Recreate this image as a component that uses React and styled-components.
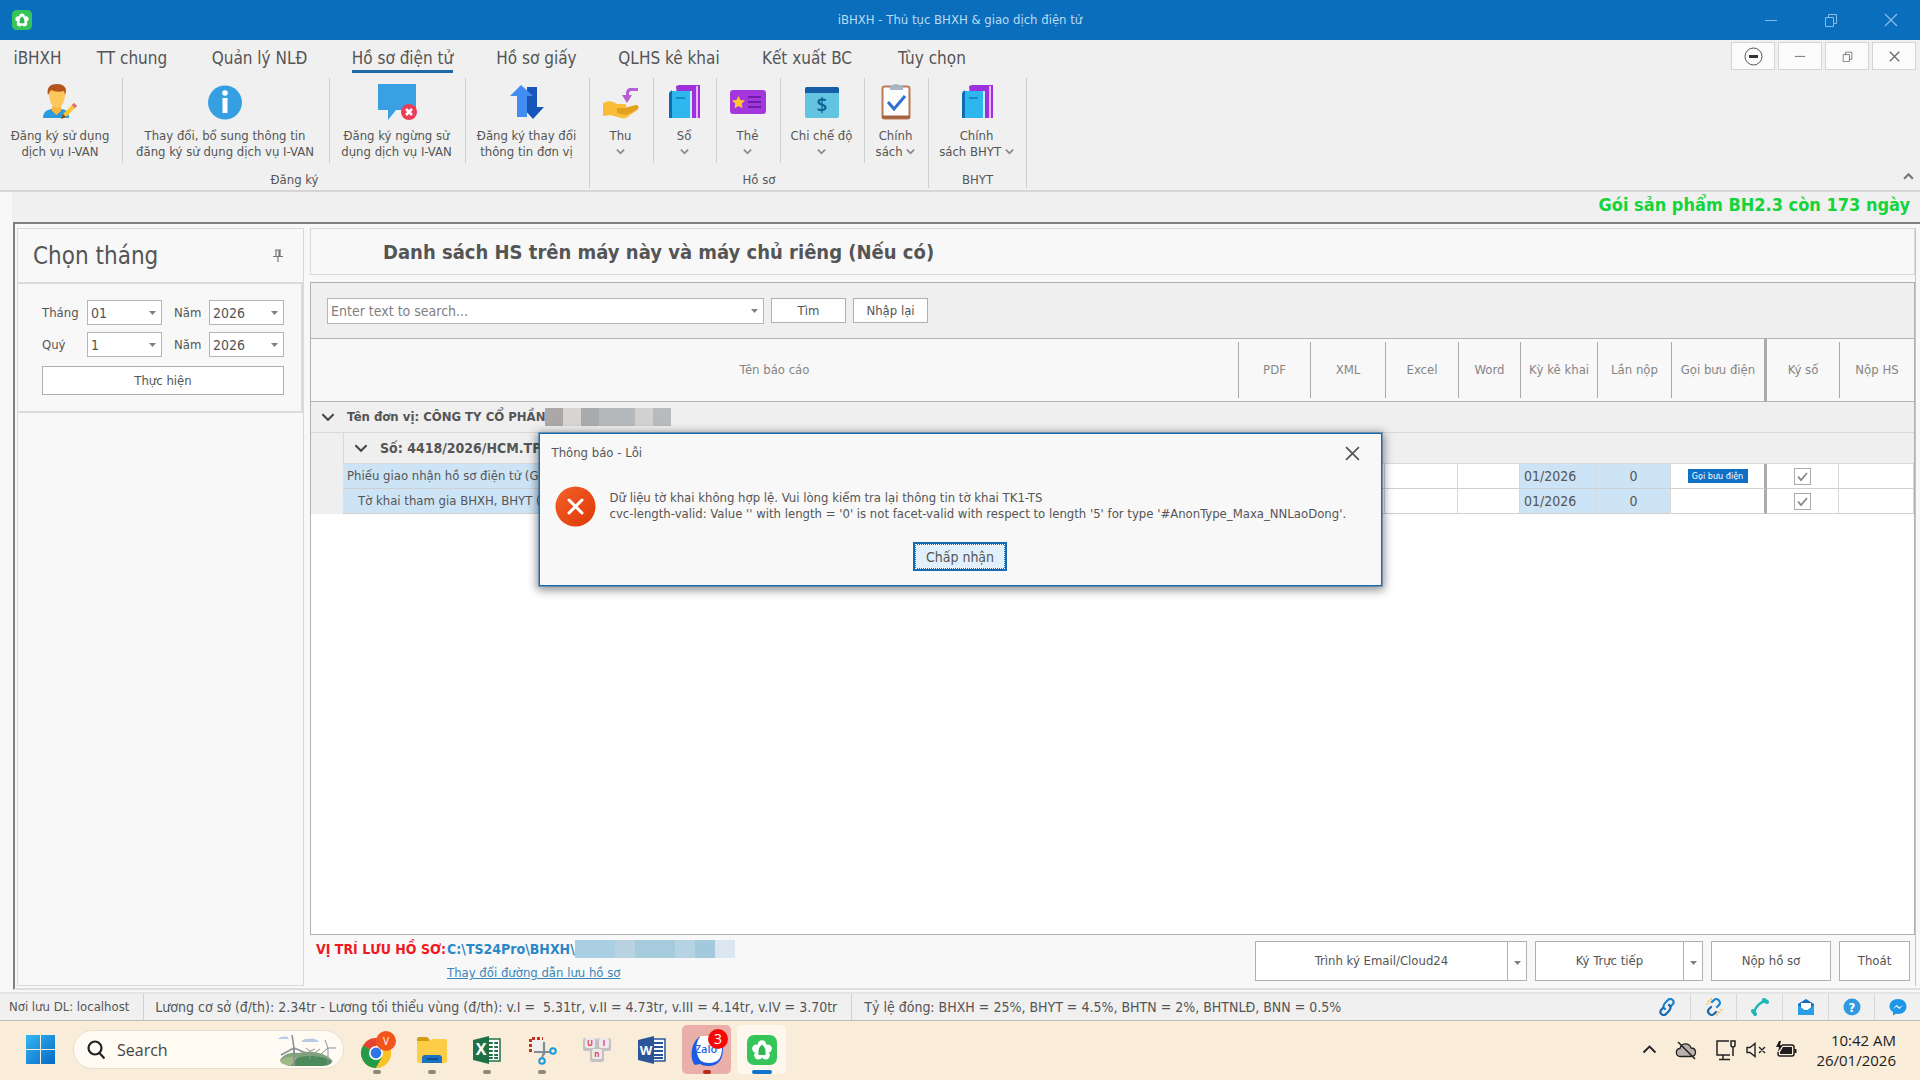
import React from 'react';
import styled, { createGlobalStyle, css } from 'styled-components';

const GlobalStyle = createGlobalStyle`
  * {
    box-sizing: border-box;
  }

  body {
    margin: 0;
    background: #f0f0f0;
    color: #555;
    font: 14px/16px "DejaVu Sans Condensed", "Open Sans", sans-serif;
  }

  button, input, select {
    margin: 0;
    color: inherit;
    font: inherit;
  }
`;

const Page = styled.div`
  display: flex;
  flex-direction: column;
  height: 100vh;
  min-width: 1280px;
`;

const Desktop = styled.div`
  position: relative;
  display: flex;
  flex: 1;
  flex-direction: column;
  min-height: 0;
`;

/* ---------- title bar ---------- */

const TitleBar = styled.header`
  display: grid;
  grid-template-columns: 1fr auto 1fr;
  align-items: center;
  height: 40px;
  padding: 0 12px;
  background: #0a6ebd;
  color: #b9dbf5;
  font-size: 13px;
`;

const WindowButtons = styled.div`
  display: flex;
  justify-content: flex-end;
  gap: 36px;
  padding-right: 5px;
`;

const PlainButton = styled.button`
  display: inline-flex;
  align-items: center;
  justify-content: center;
  padding: 0;
  border: 0;
  background: none;
`;

const TitleButton = styled(PlainButton)`
  width: 24px;
  height: 24px;
  color: #86bbea;
`;

/* ---------- ribbon ---------- */

const TabBar = styled.nav`
  display: flex;
  height: 35px;
`;

const Tab = styled.button`
  width: ${p => p.$width}px;
  padding: 0;
  border: 0;
  background: none;
  font-size: 17px;
  line-height: 22px;
  white-space: nowrap;

  span {
    display: inline-block;
    padding: 5px 0 1px;
    border-bottom: 3px solid ${p => (p.$active ? '#1f69ab' : 'transparent')};
  }
`;

const ChildButtons = styled.div`
  display: flex;
  gap: 3px;
  margin-left: auto;
  padding: 2px 4px 0 0;
`;

const ChildButton = styled(PlainButton)`
  width: 44px;
  height: 28px;
  border: 1px solid #d4d4d4;
  background: #fbfbfb;
  color: #666;
`;

const Ribbon = styled.div`
  display: flex;
  height: 117px;
  padding-top: 3px;
  border-bottom: 2px solid #d6d6d6;
`;

const Group = styled.section`
  display: flex;
  flex-direction: column;
  height: 110px;
  border-right: 1px solid #cfcfcf;
`;

const GroupItems = styled.div`
  display: flex;
  height: 87px;
`;

const GroupLabel = styled.div`
  margin-top: 9px;
  font-size: 13px;
  text-align: center;
`;

const RibbonItem = styled.button`
  display: flex;
  flex-direction: column;
  align-items: center;
  width: ${p => p.$width}px;
  padding: 6px 2px 0 0;
  border: 0;
  border-right: 1px solid #cfcfcf;
  background: none;
  font-size: 13px;
  white-space: nowrap;

  &:last-child {
    border-right: 0;
  }

  > svg {
    flex: none;
    margin-bottom: 8px;
  }
`;

const CollapseButton = styled(PlainButton)`
  align-self: flex-end;
  width: 24px;
  height: 24px;
  margin: 0 0 2px auto;
`;

const Notice = styled.div`
  height: 30px;
  margin-left: 12px;
  padding: 2px 10px 0 0;
  box-shadow: -12px 0 0 #f8f8f8;
  color: #14d43a;
  font-size: 18px;
  font-weight: bold;
  line-height: 22px;
  text-align: right;
`;

/* ---------- workspace ---------- */

const Workspace = styled.main`
  display: flex;
  flex: 1;
  gap: 6px;
  min-height: 0;
  margin: 0 0 2px;
  padding: 4px 4px 2px 2px;
  border-top: 2px solid #808080;
  border-left: 2px solid #808080;
  border-bottom: 2px solid #dedede;
  background: #f8f8f8;
`;

const WorkspaceFrame = styled.div`
  display: flex;
  flex: 1;
  min-height: 0;
  padding: 0 0 0 13px;
  background: #f8f8f8;
`;

const Side = styled.aside`
  width: 287px;
  border: 1px solid #d9d9d9;
`;

const SideHeader = styled.div`
  display: flex;
  align-items: center;
  justify-content: space-between;
  height: 55px;
  padding: 0 20px 0 15px;
  border-bottom: 2px solid #dadada;

  h2 {
    margin: 0;
    font-size: 24px;
    font-weight: normal;
    line-height: 30px;
  }
`;

const PeriodForm = styled.form`
  display: grid;
  grid-template-columns: 45px 75px 47px 75px;
  row-gap: 7px;
  align-items: center;
  height: 129px;
  padding: 0 0 0 24px;
  border-right: 2px solid #dadada;
  border-bottom: 2px solid #dadada;
  align-content: center;

  label {
    font-size: 13px;
  }

  label:nth-of-type(even) {
    padding-left: 12px;
  }
`;

const SelectBox = styled.div`
  position: relative;

  select {
    width: 100%;
    height: 25px;
    padding: 0 3px;
    border: 1px solid #b5b5b5;
    border-radius: 0;
    background: #fff;
    appearance: none;
  }

  svg {
    position: absolute;
    top: 11px;
    right: 6px;
    pointer-events: none;
  }
`;

const Button = styled.button`
  height: ${p => p.$height || 25}px;
  width: ${p => p.$width}px;
  padding: 0;
  border: 1px solid #b0b0b0;
  background: #fefefe;
  font-size: 13px;

  ${p => p.$full && css`
    grid-column: 1 / -1;
    width: 242px;
    height: 29px;
    margin-top: 2px;
  `}
`;

const Content = styled.section`
  display: flex;
  flex: 1;
  flex-direction: column;
  min-width: 0;
  border-right: 1px solid #c4c4c4;
`;

const PageTitle = styled.h1`
  height: 47px;
  margin: 0 0 7px;
  padding: 0 72px;
  border: 1px solid #d9d9d9;
  font-size: 20px;
  line-height: 46px;
`;

const Grid = styled.div`
  flex: 1;
  min-height: 0;
  border: 1px solid #b0b0b0;
  background: #fff;
`;

const SearchBar = styled.form`
  display: flex;
  gap: 7px;
  align-items: center;
  height: 55px;
  padding: 0 16px;
  background: #efefef;
`;

const SearchBox = styled.div`
  display: flex;
  align-items: center;
  width: 437px;
  height: 26px;
  padding-right: 5px;
  border: 1px solid #b5b5b5;
  background: #fff;

  input {
    flex: 1;
    min-width: 0;
    padding: 0 3px;
    border: 0;
    outline: 0;
    background: none;
  }

  input::placeholder {
    color: #808080;
    opacity: 1;
  }
`;

const Table = styled.table`
  width: 100%;
  border-collapse: separate;
  border-spacing: 0;
  table-layout: fixed;
`;

const HeadCell = styled.th`
  height: 64px;
  padding: 0;
  border-top: 1px solid #b5b5b5;
  border-bottom: 1px solid #b5b5b5;
  border-right: ${p => (p.$fixedEdge ? '3px solid #aaa' : '0')};
  background: #f8f8f8;
  color: #858585;
  font-size: 13px;
  font-weight: normal;
  text-align: center;

  div {
    height: 56px;
    border-left: ${p => (p.$bare ? '0' : '1px solid #aaa')};
    line-height: 56px;
  }
`;

const GroupCell = styled.td`
  height: ${p => p.$height}px;
  padding: 0 10px;
  border-bottom: 1px solid #d8d8d8;
  border-left: ${p => (p.$nested ? '1px solid #d8d8d8' : '0')};
  background: #efefef;
  font-weight: bold;
  font-size: ${p => (p.$nested ? 14 : 13)}px;

  > div {
    display: flex;
    align-items: center;
    white-space: nowrap;
  }

  button {
    width: 14px;
    margin-right: 12px;
  }
`;

const IndentCell = styled.td`
  padding: 0;
  background: #efefef;
`;

const Cell = styled.td`
  height: 25px;
  padding: 0 4px 0 ${p => p.$indent || 4}px;
  border-right: ${p => (p.$fixedEdge ? '3px solid #aaa' : '1px solid #d8d8d8')};
  border-bottom: 1px solid #d0d0d0;
  background: ${p => (p.$selected ? '#cde4f7' : '#fff')};
  font-size: ${p => (p.$small ? 13 : 14)}px;
  line-height: 16px;
  text-align: ${p => p.$align || 'left'};
  white-space: nowrap;
  overflow: hidden;
`;

const PostTag = styled.button`
  display: block;
  width: 60px;
  height: 14px;
  margin: 0 auto;
  padding: 0;
  border: 0;
  background: #0f70c5;
  color: #fff;
  font-size: 9px;
  line-height: 14px;
`;

const CheckBox = styled.span`
  position: relative;
  display: block;
  width: 17px;
  height: 17px;
  margin: 0 auto;

  input {
    display: block;
    width: 17px;
    height: 17px;
    margin: 0;
    border: 1px solid #aaa;
    background: #fff;
    appearance: none;
  }

  svg {
    position: absolute;
    top: 2px;
    left: 2px;
    pointer-events: none;
  }
`;

const Mosaic = styled.span`
  display: inline-flex;
  height: 18px;

  i {
    width: ${p => p.$tile}px;
    background: var(--c);
  }
`;

const Footer = styled.footer`
  display: flex;
  align-items: center;
  justify-content: space-between;
  height: 51px;
  padding: 0 5px 0 6px;
`;

const StoragePath = styled.div`
  display: grid;
  grid-template-columns: 131px auto;
  row-gap: 7px;
  align-items: center;
  color: #2b88c6;
  font-size: 14px;
  white-space: nowrap;

  b {
    color: #f01822;
  }

  strong {
    display: flex;
    align-items: center;
  }

  a {
    grid-column: 2;
    color: #3a86b8;
    font-size: 13px;
  }
`;

const Actions = styled.div`
  display: flex;
  gap: 8px;
`;

const SplitButton = styled.div`
  display: flex;

  button + button {
    margin-left: -1px;
  }
`;

const StatusBar = styled.div`
  display: flex;
  align-items: center;
  height: 29px;
  border-top: 2px solid #e4e4e4;
  border-bottom: 1px solid #bdbdbd;
  background: #f0f0f0;
`;

const StatusText = styled.div`
  padding: 4px 14px 4px ${p => p.$left}px;
  border-right: ${p => (p.$last ? '0' : '1px solid #d0d0d0')};
  font-size: ${p => (p.$small ? 13 : 14)}px;
  line-height: 18px;
  white-space: pre;
`;

const StatusIcons = styled.div`
  display: flex;
  margin-left: auto;

  button {
    width: 46px;
    height: 26px;
  }

  button + button {
    border-left: 1px solid #d8d8d8;
  }
`;

/* ---------- message dialog ---------- */

const DialogLayer = styled.div`
  position: absolute;
  inset: 0;
  display: flex;
  align-items: center;
  justify-content: center;
  padding-bottom: 2px;
`;

const Dialog = styled.div`
  width: 843px;
  height: 153px;
  border: 1px solid #1a69ab;
  outline: 1px solid rgba(26, 105, 171, 0.45);
  background: #f8f8f8;
  box-shadow: 0 2px 9px 2px rgba(0, 0, 0, 0.45);
  font-size: 13px;
`;

const DialogHeader = styled.div`
  display: flex;
  align-items: center;
  justify-content: space-between;
  height: 38px;
  padding: 0 21px 0 12px;
`;

const DialogBody = styled.div`
  display: flex;
  align-items: center;
  gap: 14px;
  height: 68px;
  padding: 0 15px;

  svg {
    flex: none;
  }

  p {
    margin: 0;
    white-space: nowrap;
  }
`;

const AcceptButton = styled.button`
  display: block;
  width: 94px;
  height: 29px;
  margin: 2px auto 0;
  padding: 0;
  border: 3px solid #156ab4;
  outline: 1px dotted #fff;
  outline-offset: -3px;
  background: #e1f0fa;
  font-size: 14px;
`;

/* ---------- taskbar ---------- */

const Taskbar = styled.footer`
  display: flex;
  align-items: center;
  height: 59px;
  padding: 0 24px 2px 26px;
  background: #f9edda;
  color: #1c1c1c;
  font-family: "Open Sans", sans-serif;
`;

const TaskSearch = styled.label`
  display: flex;
  align-items: center;
  width: 271px;
  height: 39px;
  margin: 0 5px 0 18px;
  padding: 0 7px 0 13px;
  border: 1px solid #e9dfcf;
  border-radius: 20px;
  background: #fffaf2;

  input {
    flex: 1;
    min-width: 0;
    padding: 0 12px;
    border: 0;
    outline: 0;
    background: none;
    font-size: 16px;
  }

  input::placeholder {
    color: #454545;
    opacity: 1;
  }
`;

const TaskApp = styled(PlainButton)`
  position: relative;
  width: 49px;
  height: 49px;
  margin: 0 3px;
  border-radius: 5px;
  background: ${p => p.$back || 'none'};

  &::after {
    content: '';
    position: absolute;
    bottom: 0;
    left: 50%;
    width: ${p => p.$mark || 8}px;
    height: 4px;
    margin-left: -${p => (p.$mark || 8) / 2}px;
    border-radius: 2px;
    background: ${p => p.$markColor || 'none'};
  }
`;

const Tray = styled.div`
  display: flex;
  align-items: center;
  gap: 9px;
  margin-left: auto;
`;

const Clock = styled.div`
  width: 90px;
  font-size: 15px;
  line-height: 20px;
  text-align: right;
`;

/* ---------- drawings ---------- */

const Chevron = ({ up, size = 10, color = '#777', width = 2 }) => (
  <svg width={size} height={size} viewBox="0 0 10 10" fill="none" stroke={color} strokeWidth={width}>
    <path d={up ? 'M1 7l4-4 4 4' : 'M1 3l4 4 4-4'} />
  </svg>
);

const Caret = () => (
  <svg width="7" height="4" viewBox="0 0 7 4"><path d="M0 0h7L3.5 4z" fill="#808080" /></svg>
);

const Minimize = ({ size = 14 }) => (
  <svg width={size} height={size} viewBox="0 0 14 14"><path d="M1 7.5h12" stroke="currentColor" /></svg>
);

const Restore = ({ size = 14 }) => (
  <svg width={size} height={size} viewBox="0 0 14 14" fill="none" stroke="currentColor">
    <path d="M1.500 4.500h8v9h-8zM4.500 4.500v-3h8v9h-3" />
  </svg>
);

const Close = ({ size = 14, width = 1.3 }) => (
  <svg width={size} height={size} viewBox="0 0 14 14" stroke="currentColor" strokeWidth={width}>
    <path d="M1 1l12 12M13 1L1 13" />
  </svg>
);

const AppLogo = ({ size }) => (
  <svg width={size} height={size} viewBox="0 0 30 30">
    <rect width="30" height="30" rx="7" fill="#35c55b" />
    <g fill="#fff">
      <circle cx="15" cy="9.500" r="4.200" />
      <circle cx="9.300" cy="13.600" r="4.200" />
      <circle cx="20.700" cy="13.600" r="4.200" />
      <circle cx="11.400" cy="20.300" r="4.200" />
      <circle cx="18.600" cy="20.300" r="4.200" />
    </g>
    <path d="M15 9.500c2.500 2.500 3.500 4 3.500 6.500V20h-7v-4c0-2.500 1-4 3.500-6.500z" fill="#2fb553" />
  </svg>
);

const UserIcon = () => (
  <svg width="36" height="36" viewBox="0 0 36 36">
    <path d="M1 34c0-7 5-9 11-9h6c6 0 9 3 9 9z" fill="#2b9be0" />
    <path d="M10 22h9v5l-4.500 4-4.500-4z" fill="#f6b73c" />
    <path d="M7 9c0-6 3-7 8-7s8 2 8 8c0 8-4 14-8 14S7 18 7 9z" fill="#fdc75b" />
    <path d="M6 11C4 3 9 0 15 0c7 0 11 4 8 11l-1-4c-4 1-9 1-13-1z" fill="#b5541c" />
    <path d="M21 30L32 19l3 3-11 11-5 2z" fill="#f9c331" />
    <path d="M30 21l2-2 3 3-2 2z" fill="#d9668a" />
    <path d="M19 35l2-5 3 3z" fill="#6b4a2b" />
  </svg>
);

const InfoIcon = () => (
  <svg width="36" height="36" viewBox="0 0 36 36">
    <circle cx="18" cy="18.500" r="17" fill="#369fe2" />
    <circle cx="18" cy="9" r="2.800" fill="#fff" />
    <path d="M15.500 14h5v15h-5z" fill="#fff" />
  </svg>
);

const StopIcon = () => (
  <svg width="40" height="36" viewBox="0 0 40 36">
    <path d="M1 0h38v26H19l-8 10V26H1z" fill="#39a0e3" />
    <circle cx="32" cy="28" r="8" fill="#ec3d55" />
    <path d="M29 25l6 6M35 25l-6 6" stroke="#fff" strokeWidth="2.600" />
  </svg>
);

const ArrowsIcon = () => (
  <svg width="36" height="36" viewBox="0 0 36 36">
    <path d="M18 3h10v20h7L24 35 13 23h5z" fill="#1755b8" />
    <path d="M12 1l12 11h-6v21H8V12H1z" fill="#418df2" />
  </svg>
);

const HandIcon = () => (
  <svg width="36" height="36" viewBox="0 0 36 36">
    <path d="M0 19c6-3 10-2 14 1h7c3 0 3 3 1 4l11-3c3 0 3 3 1 5L23 34c-3 1-5 0-8-1l-8-2-7 1z" fill="#f9bd38" />
    <path d="M14 24h8l11-3c3 0 3 3 1 5l-11 5-9-2z" fill="#e3a020" />
    <path d="M35 4H28c-4 0-5 2-5 7h-4l5 8 5-8h-3c0-3 0-4 3-4h6z" fill="#b75fd6" />
  </svg>
);

const BooksIcon = () => (
  <svg width="34" height="36" viewBox="0 0 34 36">
    <path d="M9 2l3-1h21v33H12z" fill="#9d32dc" />
    <path d="M29 2h2v32h-2z" fill="#eeb5fa" />
    <path d="M3 7h20v27H3z" fill="#2eb6ee" />
    <path d="M2 9l3-3v28H2z" fill="#0c6eae" />
    <path d="M23 7h2v27h-2z" fill="#c4ecfa" />
    <path d="M9 14h9" stroke="#147caf" strokeWidth="1.500" />
  </svg>
);

const CardIcon = () => (
  <svg width="36" height="36" viewBox="0 0 36 36">
    <rect y="6" width="36" height="24" rx="3" fill="#a436dd" />
    <path d="M8.500 12l2 4 4.500.6-3.300 3.100.9 4.500-4.100-2.200-4 2.200.8-4.500L2 16.600l4.500-.6z" fill="#ffc533" />
    <path d="M18 13h13M18 18h13M18 23h13" stroke="#6d1ea5" strokeWidth="1.800" />
  </svg>
);

const MoneyIcon = () => (
  <svg width="36" height="36" viewBox="0 0 36 36">
    <rect x="1" y="3" width="34" height="31" rx="2" fill="#63c4e2" />
    <path d="M1 9V5q0-2 2-2h30q2 0 2 2v4z" fill="#155fa6" />
    <text x="18" y="28" textAnchor="middle" fontFamily="Open Sans" fontSize="19" fontWeight="600" fill="#10608b">$</text>
  </svg>
);

const ClipboardIcon = () => (
  <svg width="36" height="36" viewBox="0 0 36 36">
    <rect x="4.500" y="2.500" width="27" height="32" rx="2" fill="#fdfdfd" stroke="#bd7854" strokeWidth="2" />
    <path d="M4 33h28" stroke="#a55f40" strokeWidth="3" />
    <path d="M12 1h3q3-2 6 0h4v5H12z" fill="#a9b4c2" />
    <path d="M10 18l6 7 11-13" fill="none" stroke="#2e6fd3" strokeWidth="3" />
  </svg>
);

const PinIcon = () => (
  <svg width="10" height="14" viewBox="0 0 10 14" fill="none" stroke="#777" strokeWidth="1.200">
    <path d="M2 1h6M3 1v6M7 1v6M6 1v6M0 7.500h10M5 7.500V13" />
  </svg>
);

const ErrorIcon = () => (
  <svg width="41" height="41" viewBox="0 0 41 41">
    <defs>
      <linearGradient id="err" x1="0" y1="0" x2="1" y2="1">
        <stop offset="0" stopColor="#f4602a" />
        <stop offset="1" stopColor="#dd3a06" />
      </linearGradient>
    </defs>
    <circle cx="20.500" cy="20.500" r="20" fill="url(#err)" />
    <path d="M14 14l13 13M27 14L14 27" stroke="#fff" strokeWidth="3" strokeLinecap="round" />
  </svg>
);

const LinkIcon = ({ broken }) => (
  <svg width="18" height="18" viewBox="0 0 18 18" fill="none" strokeWidth="2.200" strokeLinecap="round">
    <g stroke="#1c83cf">
      <path d={broken ? 'M7 4l2-2c3-3 8 2 5 5l-2 2' : 'M7 11c-3-2-1-5 1-7l2-2c3-3 7 1 5 4l-2 2'} />
      <path d={broken ? 'M11 14l-2 2c-3 3-8-2-5-5l2-2' : 'M11 7c3 2 1 5-1 7l-2 2c-3 3-7-1-5-4l2-2'} stroke="#1768b0" />
    </g>
    {broken && <path d="M3 3l2 1M6 0v2M1 6h2M15 15l-2-1M12 18v-2M17 12h-2" stroke="#f4b73e" strokeWidth="1.200" />}
  </svg>
);

const PhoneIcon = () => (
  <svg width="18" height="18" viewBox="0 0 18 18" fill="none" stroke="#21b5b5" strokeLinecap="round">
    <path d="M3 14C5 8 8 5 14 3" strokeWidth="2.400" />
    <path d="M2 13l2 3M13 2l3 2" strokeWidth="4" />
  </svg>
);

const MailIcon = () => (
  <svg width="18" height="18" viewBox="0 0 18 18">
    <path d="M1 6l8-5 8 5v10H1z" fill="#1670bd" />
    <path d="M4 5h10v7H4z" fill="#fff" />
    <path d="M1 7l8 6 8-6v10H1z" fill="#2b9ee8" />
  </svg>
);

const HelpIcon = () => (
  <svg width="18" height="18" viewBox="0 0 18 18">
    <circle cx="9" cy="9" r="8.500" fill="#2f9ae2" />
    <text x="9" y="14" textAnchor="middle" fontSize="13" fontWeight="bold" fill="#fff">?</text>
  </svg>
);

const MessengerIcon = () => (
  <svg width="18" height="18" viewBox="0 0 18 18">
    <path d="M9 1c5 0 8.500 3 8.500 7.500S14 16 9 16l-2-.3L4 17.500V14C2 13 .5 11 .5 8.500.5 4 4 1 9 1z" fill="#1f97e8" />
    <path d="M4 11l3.500-4 3 2.500L14 7l-3.500 4-3-2.500z" fill="#fff" />
  </svg>
);

const WindowsLogo = () => (
  <svg width="29" height="29" viewBox="0 0 29 29">
    <defs>
      <linearGradient id="win" x1="0" y1="0" x2="29" y2="29" gradientUnits="userSpaceOnUse">
        <stop offset="0" stopColor="#35b8f2" />
        <stop offset="1" stopColor="#0568c7" />
      </linearGradient>
    </defs>
    <path d="M0 0h14v14H0zM15 0h14v14H15zM0 15h14v14H0zM15 15h14v14H15z" fill="url(#win)" />
  </svg>
);

const SearchIcon = () => (
  <svg width="18" height="20" viewBox="0 0 18 20" fill="none" stroke="#222" strokeWidth="2.200">
    <circle cx="8" cy="8" r="6.500" />
    <path d="M12.500 13l5 5.500" />
  </svg>
);

const WindFarm = () => (
  <svg width="58" height="32" viewBox="0 0 58 32">
    <path d="M0 5q3-3 6-2 3-2 5 2zM23 8q3-4 8-3 6-2 10 3z" fill="#b4cbe5" />
    <path d="M2 26c4-6 10-8 18-7l6-1c9-1 22 1 29 9-4 4-50 7-53-1z" fill="#7fa37d" />
    <path d="M8 31c8-12 38-11 46-3-2 3-6 4-10 4H12z" fill="#4c8a5b" />
    <path d="M2 27c5-5 12-5 17-3l-6 8c-6-1-10-2-11-5z" fill="#9fba86" />
    <g stroke="#8d9199" fill="none">
      <path d="M16 14v18" strokeWidth="2" />
      <path d="M16 14L14 1M16 14l12 5M16 14L3 21" strokeWidth="1.600" />
      <path d="M50 14v17M50 14L47 6M50 14h8M50 14l-7 6M32 17v8M32 17l-4-3M32 17l5-2M38 18v6M38 18l4-3" />
    </g>
  </svg>
);

const ChromeIcon = () => (
  <svg width="38" height="38" viewBox="0 0 38 38">
    <circle cx="18" cy="22" r="15" fill="#f9c229" />
    <path d="M18 22L5 14.500a15 15 0 0 1 26 0z" fill="#e54433" />
    <path d="M18 22L5 14.500A15 15 0 0 0 18 37l6.500-11.500z" fill="#259a48" />
    <path d="M18 22l6.500 3.500L18 37a15 15 0 0 0 13-22.500H18z" fill="#f9c229" />
    <circle cx="18" cy="22" r="7" fill="#fff" />
    <circle cx="18" cy="22" r="5.400" fill="#3174e8" />
    <circle cx="28" cy="10" r="10" fill="#f2551c" />
    <text x="28" y="14" textAnchor="middle" fontFamily="Open Sans" fontSize="10" fill="#fff">V</text>
  </svg>
);

const FolderIcon = () => (
  <svg width="30" height="30" viewBox="0 0 30 30">
    <path d="M0 4q0-2 2-2h8l3 3-2 4H0z" fill="#d69a14" />
    <path d="M0 6h13l2-2h13q2 0 2 2v20q0 2-2 2H2q-2 0-2-2z" fill="#fccd45" />
    <path d="M5 28v-5q0-3 3-3h14q3 0 3 3v5z" fill="#1b72c1" />
    <path d="M10 24h11" stroke="#0d4f91" strokeWidth="2" />
  </svg>
);

const OfficeIcon = ({ letter, color }) => (
  <svg width="30" height="30" viewBox="0 0 30 30">
    <path d="M14 4h14v22H14z" fill="#fff" stroke={color} strokeWidth="1.500" />
    <path d="M17 8h9M17 12h9M17 16h9M17 20h9M17 23h9" stroke={color} strokeWidth="1.800" />
    {letter === 'X' && <path d="M21.500 5v20" stroke="#fff" strokeWidth="1.500" />}
    <path d="M1 5l16-4v28L1 25z" fill={color} />
    <text x="9" y="20" textAnchor="middle" fontFamily="Open Sans" fontSize={letter === 'X' ? 16 : 13} fontWeight="bold" fill="#fff">{letter}</text>
  </svg>
);

const SnipIcon = () => (
  <svg width="30" height="30" viewBox="0 0 30 30" fill="none">
    <rect x="5" y="5" width="11" height="11" rx="2" fill="#efefef" />
    <path d="M3.500 17V3.500H16" stroke="#c3321f" strokeWidth="3" strokeDasharray="3 2" />
    <path d="M17 7v13M7 17h16" stroke="#7f8a94" strokeWidth="2.200" />
    <path d="M17 17l-2 6" stroke="#7f8a94" strokeWidth="2" />
    <circle cx="26" cy="16" r="2.800" stroke="#1c9bd6" strokeWidth="2" />
    <circle cx="15" cy="26" r="2.800" stroke="#1c9bd6" strokeWidth="2" />
  </svg>
);

const KeysIcon = () => (
  <svg width="30" height="30" viewBox="0 0 30 30">
    {[[1, 3, 'U'], [15, 3, 'I'], [8, 14, 'n']].map(([x, y, key]) => (
      <g key={key}>
        <rect x={x} y={y} width="14" height="13" rx="2.500" fill="#c4c2c0" />
        <rect x={x + 2} y={y} width="10" height="10" rx="2" fill="#eeeaea" />
        <text x={x + 7} y={y + 8} textAnchor="middle" fontSize="8" fontWeight="bold" fill="#e0455c">{key}</text>
      </g>
    ))}
  </svg>
);

const ZaloIcon = () => (
  <svg width="42" height="42" viewBox="0 0 42 42">
    <path d="M13 8h13c7 0 11 5 11 12 0 11-5 17-15 17-4 0-6-1-8-2l-5 1c-5-5-5-21 4-28z" fill="#1a5ce8" />
    <path d="M15 7h12c6 0 9 5 9 12 0 10-4 15-13 15-4 0-7-1-9-3-5-7-5-19 1-24z" fill="#fff" />
    <text x="20" y="24" textAnchor="middle" fontFamily="Open Sans" fontSize="11" fontWeight="600" fill="#1a66e6">Zalo</text>
    <circle cx="32" cy="10" r="10" fill="#f60808" />
    <text x="32" y="15" textAnchor="middle" fontFamily="Open Sans" fontSize="14" fill="#fff">3</text>
  </svg>
);

const CloudOffIcon = () => (
  <svg width="22" height="22" viewBox="0 0 22 22">
    <path d="M6 17.500C0 17.500 0 10 5 9.500 6 4 14 3 16 9c6 0 6 8.500 0 8.500z" fill="#b8b2aa" stroke="#222" strokeWidth="1.300" />
    <path d="M3 3l17 17" stroke="#222" strokeWidth="1.600" />
  </svg>
);

const MonitorIcon = () => (
  <svg width="22" height="22" viewBox="0 0 22 22" fill="none" stroke="#222" strokeWidth="1.500">
    <path d="M14 2H2v14h13M8 16v4M4 20.500h11M18 8v9M16 2h4v4q0 2-2 2t-2-2z" />
  </svg>
);

const MuteIcon = () => (
  <svg width="20" height="16" viewBox="0 0 20 16" fill="none" stroke="#222" strokeWidth="1.400">
    <path d="M1 5.500h3l5-4v13l-5-4H1zM13 5l6 6M19 5l-6 6" />
  </svg>
);

const BatteryIcon = () => (
  <svg width="22" height="18" viewBox="0 0 22 18">
    <path d="M7 4h10q2 0 2 2v7q0 2-2 2H5q-2 0-2-2v-2" fill="none" stroke="#1c1c1c" strokeWidth="1.500" />
    <path d="M8 6h9v7H5v-2z" fill="#1c1c1c" />
    <path d="M19.500 8h2v4h-2z" fill="#1c1c1c" />
    <path d="M4 0L1 6h3l-1 5 5-7H5l1-4z" fill="#1c1c1c" />
  </svg>
);

/* ---------- data ---------- */

const tabs = [
  ['iBHXH', 75], ['TT chung', 114], ['Quản lý NLĐ', 141], ['Hồ sơ điện tử', 145],
  ['Hồ sơ giấy', 123], ['QLHS kê khai', 142], ['Kết xuất BC', 134], ['Tùy chọn', 116],
];

const groups = [
  {
    label: 'Đăng ký',
    items: [
      { icon: UserIcon, width: 123, lines: ['Đăng ký sử dụng', 'dịch vụ I-VAN'] },
      { icon: InfoIcon, width: 207, lines: ['Thay đổi, bổ sung thông tin', 'đăng ký sử dụng dịch vụ I-VAN'] },
      { icon: StopIcon, width: 136, lines: ['Đăng ký ngừng sử', 'dụng dịch vụ I-VAN'] },
      { icon: ArrowsIcon, width: 123, lines: ['Đăng ký thay đổi', 'thông tin đơn vị'] },
    ],
  },
  {
    label: 'Hồ sơ',
    items: [
      { icon: HandIcon, width: 64, lines: ['Thu'], menu: true },
      { icon: BooksIcon, width: 63, lines: ['Sổ'], menu: true },
      { icon: CardIcon, width: 64, lines: ['Thẻ'], menu: true },
      { icon: MoneyIcon, width: 84, lines: ['Chi chế độ'], menu: true },
      { icon: ClipboardIcon, width: 63, lines: ['Chính', 'sách'], menu: true },
    ],
  },
  {
    label: 'BHYT',
    items: [{ icon: BooksIcon, width: 97, lines: ['Chính', 'sách BHYT'], menu: true }],
  },
];

const columns = [
  ['PDF', 72], ['XML', 75], ['Excel', 73], ['Word', 62], ['Kỳ kê khai', 77],
  ['Lần nộp', 74], ['Gọi bưu điện', 96], ['Ký số', 72], ['Nộp HS', 75],
];

const reports = [
  { name: 'Phiếu giao nhận hồ sơ điện tử (Giao dịch)', indent: 4, period: '01/2026', times: 0, post: true },
  { name: 'Tờ khai tham gia BHXH, BHYT (TK1-TS)', indent: 15, period: '01/2026', times: 0 },
];

const greyTiles = ['#aba7a7', '#d8d4d1', '#a9abac', '#b5b9bb', '#b5b9bb', '#d2d1cf', '#b9babb'];
const blueTiles = ['#aacfe2', '#aacfe2', '#b9d2e2', '#a5cbdd', '#a5cbdd', '#b5d3e3', '#a2cadc', '#dce6f0'];

const Blurred = ({ tiles, size }) => (
  <Mosaic $tile={size}>
    {tiles.map((tile, i) => <i key={i} style={{ '--c': tile }} />)}
  </Mosaic>
);

const Period = ({ id, label, value }) => (
  <>
    <label htmlFor={id}>{label}</label>
    <SelectBox>
      <select id={id} defaultValue={value}>
        <option>{value}</option>
      </select>
      <Caret />
    </SelectBox>
  </>
);

const Reports = () => (
  <Table>
    <colgroup>
      <col width="32" />
      <col />
      {columns.map(([name, width]) => <col key={name} width={width} />)}
    </colgroup>
    <thead>
      <tr>
        <HeadCell colSpan={2} $bare><div>Tên báo cáo</div></HeadCell>
        {columns.map(([name]) => (
          <HeadCell key={name} $fixedEdge={name === 'Gọi bưu điện'} $bare={name === 'Ký số'}>
            <div>{name}</div>
          </HeadCell>
        ))}
      </tr>
    </thead>
    <tbody>
      <tr>
        <GroupCell colSpan={11} $height={31}>
          <div>
            <PlainButton aria-label="Thu gọn"><Chevron size={14} width={1.4} color="#444" /></PlainButton>
            Tên đơn vị: CÔNG TY CỔ PHẦN
            <Blurred tiles={greyTiles} size={18} />
          </div>
        </GroupCell>
      </tr>
      <tr>
        <IndentCell />
        <GroupCell colSpan={10} $height={31} $nested>
          <div>
            <PlainButton aria-label="Thu gọn"><Chevron size={14} width={1.4} color="#444" /></PlainButton>
            Số: 4418/2026/HCM.TP
          </div>
        </GroupCell>
      </tr>
      {reports.map((report, i) => (
        <tr key={report.name}>
          <IndentCell />
          <Cell $selected $small $indent={report.indent}>{report.name}</Cell>
          <Cell />
          <Cell />
          <Cell />
          <Cell />
          <Cell $selected>{report.period}</Cell>
          <Cell $selected $align="center">{report.times}</Cell>
          <Cell $fixedEdge>{report.post && <PostTag>Gọi bưu điện</PostTag>}</Cell>
          <Cell>
            <CheckBox>
              <input type="checkbox" defaultChecked aria-label={`Ký số ${i + 1}`} />
              <svg width="13" height="13" viewBox="0 0 13 13" fill="none" stroke="#888" strokeWidth="1.800">
                <path d="M2 6.500l3 3.500 6-7" />
              </svg>
            </CheckBox>
          </Cell>
          <Cell />
        </tr>
      ))}
    </tbody>
  </Table>
);

const RibbonBar = () => (
  <Ribbon>
    {groups.map(group => (
      <Group key={group.label}>
        <GroupItems>
          {group.items.map(({ icon: Icon, width, lines, menu }) => (
            <RibbonItem key={lines.join(' ')} $width={width}>
              <Icon />
              <span>{lines[0]}</span>
              <span>
                {lines[1]}
                {menu && <> <Chevron size={9} color="#8a8a8a" /></>}
              </span>
            </RibbonItem>
          ))}
        </GroupItems>
        <GroupLabel>{group.label}</GroupLabel>
      </Group>
    ))}
    <CollapseButton aria-label="Thu gọn"><Chevron up size={11} /></CollapseButton>
  </Ribbon>
);

const ErrorDialog = () => (
  <DialogLayer>
    <Dialog role="alertdialog" aria-labelledby="dialog-title">
      <DialogHeader>
        <span id="dialog-title">Thông báo - Lỗi</span>
        <PlainButton aria-label="Đóng"><Close size={15} width={1.6} /></PlainButton>
      </DialogHeader>
      <DialogBody>
        <ErrorIcon />
        <p>
          Dữ liệu tờ khai không hợp lệ. Vui lòng kiểm tra lại thông tin tờ khai TK1-TS<br />
          cvc-length-valid: Value '' with length = '0' is not facet-valid with respect to length '5' for type '#AnonType_Maxa_NNLaoDong'.
        </p>
      </DialogBody>
      <AcceptButton>Chấp nhận</AcceptButton>
    </Dialog>
  </DialogLayer>
);

const WindowsTaskbar = () => (
  <Taskbar>
    <PlainButton aria-label="Start"><WindowsLogo /></PlainButton>
    <TaskSearch>
      <SearchIcon />
      <input aria-label="Search" placeholder="Search" />
      <WindFarm />
    </TaskSearch>
    <TaskApp aria-label="Chrome" $markColor="#8f8778"><ChromeIcon /></TaskApp>
    <TaskApp aria-label="File Explorer" $markColor="#8f8778"><FolderIcon /></TaskApp>
    <TaskApp aria-label="Excel" $markColor="#8f8778"><OfficeIcon letter="X" color="#1f7145" /></TaskApp>
    <TaskApp aria-label="Snipping Tool" $markColor="#8f8778"><SnipIcon /></TaskApp>
    <TaskApp aria-label="UniKey"><KeysIcon /></TaskApp>
    <TaskApp aria-label="Word"><OfficeIcon letter="W" color="#2a5699" /></TaskApp>
    <TaskApp aria-label="Zalo" $back="#eaafa8" $markColor="#b82c1c"><ZaloIcon /></TaskApp>
    <TaskApp aria-label="iBHXH" $back="#fdf7ee" $mark={20} $markColor="#0f74cb"><AppLogo size={30} /></TaskApp>
    <Tray>
      <Chevron up size={15} width={1.2} color="#222" />
      <span />
      <CloudOffIcon />
      <span />
      <MonitorIcon />
      <MuteIcon />
      <BatteryIcon />
      <Clock>10:42 AM<br />26/01/2026</Clock>
    </Tray>
  </Taskbar>
);

const App = () => (
  <Page>
    <GlobalStyle />
    <Desktop>
      <TitleBar>
        <AppLogo size={20} />
        <span>iBHXH - Thủ tục BHXH &amp; giao dịch điện tử</span>
        <WindowButtons>
          <TitleButton aria-label="Thu nhỏ"><Minimize /></TitleButton>
          <TitleButton aria-label="Khôi phục"><Restore /></TitleButton>
          <TitleButton aria-label="Đóng"><Close /></TitleButton>
        </WindowButtons>
      </TitleBar>
      <TabBar>
        {tabs.map(([name, width]) => (
          <Tab key={name} $width={width} $active={name === 'Hồ sơ điện tử'}><span>{name}</span></Tab>
        ))}
        <ChildButtons>
          <ChildButton aria-label="Ẩn">
            <svg width="19" height="19" viewBox="0 0 19 19" fill="none" stroke="#555">
              <circle cx="9.500" cy="9.500" r="8.500" />
              <path d="M5 9.500h9" stroke="#333" strokeWidth="3" />
            </svg>
          </ChildButton>
          <ChildButton aria-label="Thu nhỏ"><Minimize size={12} /></ChildButton>
          <ChildButton aria-label="Khôi phục"><Restore size={11} /></ChildButton>
          <ChildButton aria-label="Đóng"><Close size={11} width={1.6} /></ChildButton>
        </ChildButtons>
      </TabBar>
      <RibbonBar />
      <Notice>Gói sản phẩm BH2.3 còn 173 ngày</Notice>
      <WorkspaceFrame>
        <Workspace>
          <Side>
            <SideHeader>
              <h2>Chọn tháng</h2>
              <PlainButton aria-label="Ghim"><PinIcon /></PlainButton>
            </SideHeader>
            <PeriodForm>
              <Period id="month" label="Tháng" value="01" />
              <Period id="month-year" label="Năm" value="2026" />
              <Period id="quarter" label="Quý" value="1" />
              <Period id="quarter-year" label="Năm" value="2026" />
              <Button type="button" $full>Thực hiện</Button>
            </PeriodForm>
          </Side>
          <Content>
            <PageTitle>Danh sách HS trên máy này và máy chủ riêng (Nếu có)</PageTitle>
            <Grid>
              <SearchBar>
                <SearchBox>
                  <input aria-label="Tìm" placeholder="Enter text to search..." />
                  <Caret />
                </SearchBox>
                <Button type="button" $width={75}>Tìm</Button>
                <Button type="button" $width={75}>Nhập lại</Button>
              </SearchBar>
              <Reports />
            </Grid>
            <Footer>
              <StoragePath>
                <b>VỊ TRÍ LƯU HỒ SƠ:</b>
                <strong>C:\TS24Pro\BHXH\<Blurred tiles={blueTiles} size={20} /></strong>
                <a href="#path">Thay đổi đường dẫn lưu hồ sơ</a>
              </StoragePath>
              <Actions>
                <SplitButton>
                  <Button $width={253} $height={40}>Trình ký Email/Cloud24</Button>
                  <Button $width={20} $height={40} aria-label="Mở"><Caret /></Button>
                </SplitButton>
                <SplitButton>
                  <Button $width={149} $height={40}>Ký Trực tiếp</Button>
                  <Button $width={20} $height={40} aria-label="Mở"><Caret /></Button>
                </SplitButton>
                <Button $width={120} $height={40}>Nộp hồ sơ</Button>
                <Button $width={71} $height={40}>Thoát</Button>
              </Actions>
            </Footer>
          </Content>
        </Workspace>
      </WorkspaceFrame>
      <StatusBar>
        <StatusText $left={9} $small>Nơi lưu DL: localhost</StatusText>
        <StatusText $left={11}>{'Lương cơ sở (đ/th): 2.34tr - Lương tối thiểu vùng (đ/th): v.I =  5.31tr, v.II = 4.73tr, v.III = 4.14tr, v.IV = 3.70tr'}</StatusText>
        <StatusText $left={12} $last>Tỷ lệ đóng: BHXH = 25%, BHYT = 4.5%, BHTN = 2%, BHTNLĐ, BNN = 0.5%</StatusText>
        <StatusIcons>
          <PlainButton aria-label="Kết nối"><LinkIcon /></PlainButton>
          <PlainButton aria-label="Ngắt kết nối"><LinkIcon broken /></PlainButton>
          <PlainButton aria-label="Gọi"><PhoneIcon /></PlainButton>
          <PlainButton aria-label="Thư"><MailIcon /></PlainButton>
          <PlainButton aria-label="Trợ giúp"><HelpIcon /></PlainButton>
          <PlainButton aria-label="Messenger"><MessengerIcon /></PlainButton>
        </StatusIcons>
      </StatusBar>
      <ErrorDialog />
    </Desktop>
    <WindowsTaskbar />
  </Page>
);

export default App;
